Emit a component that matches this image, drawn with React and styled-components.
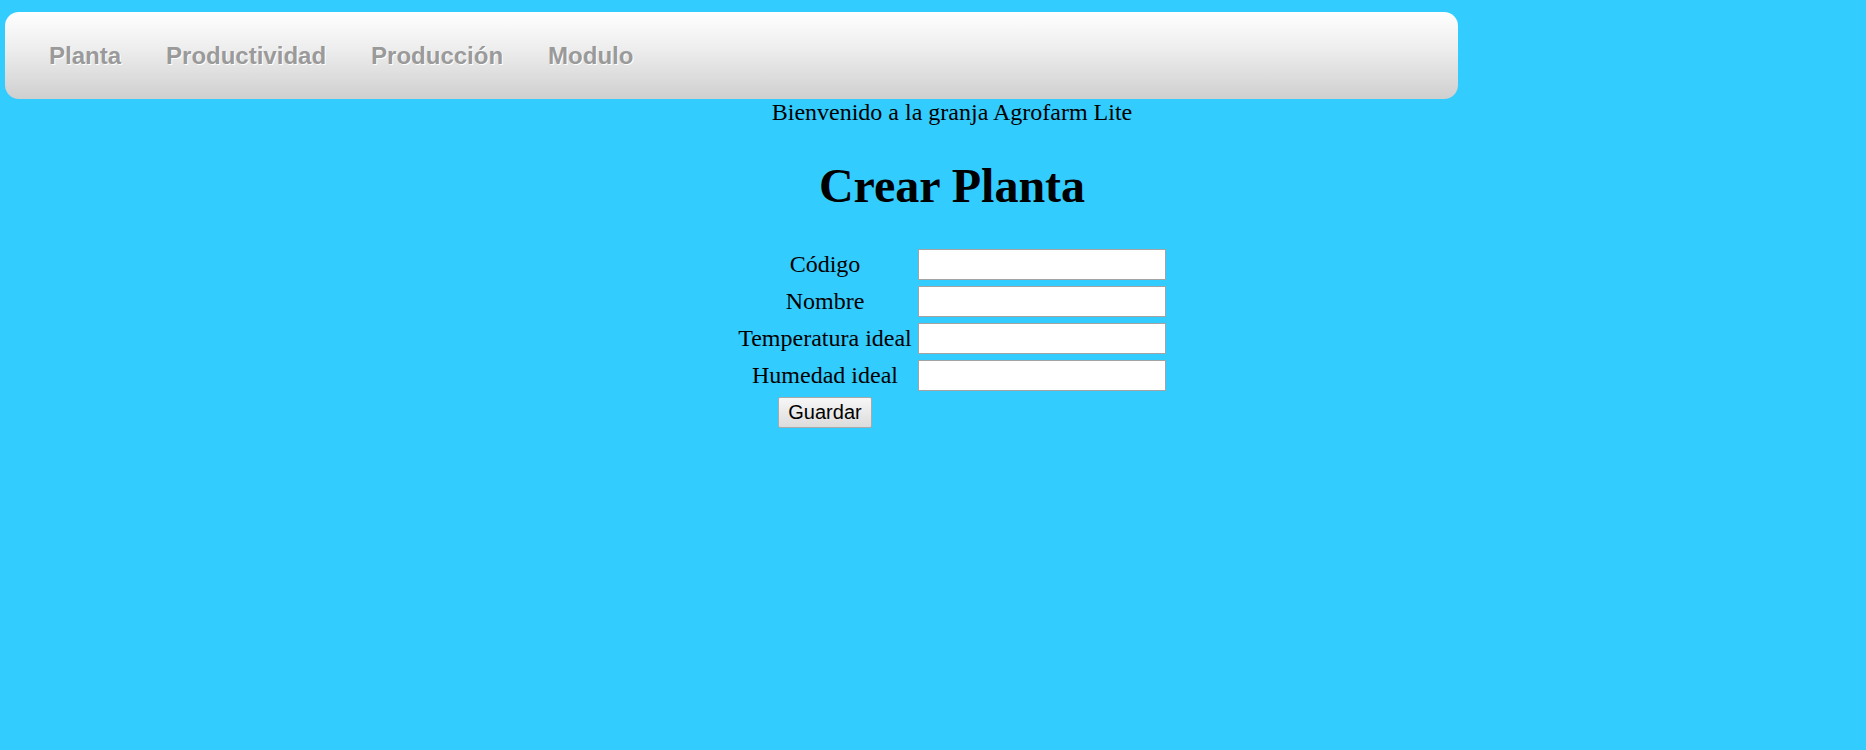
import { createGlobalStyle, styled } from "styled-components";

const GlobalStyle = createGlobalStyle`
    html, body {
        margin: 0;
        padding: 0;
        background: #33ccff;
    }
    body {
        font-family: "Liberation Serif", "Times New Roman", serif;
        color: #000;
    }
`;

const Page = styled.div`
    min-height: 750px;
    padding: 12px 0 0 5px;
    box-sizing: border-box;
`;

const NavBar = styled.nav`
    width: 1453px;
    height: 87px;
    box-sizing: border-box;
    display: flex;
    align-items: center;
    gap: 45px;
    padding-left: 44px;
    border-radius: 14px;
    background: linear-gradient(to bottom, #ffffff 0%, #ececec 45%, #cfcfcf 100%);
`;

const NavLink = styled.a`
    font-family: "Liberation Sans", Arial, sans-serif;
    font-weight: bold;
    font-size: 24px;
    color: #9a9a9a;
    text-decoration: none;
    text-shadow: 1px 1px 0 #ffffff;
    cursor: pointer;
`;

const Content = styled.main`
    padding-left: 33px;
    text-align: center;
`;

const Welcome = styled.div`
    font-size: 24px;
    line-height: 27px;
`;

const Title = styled.h1`
    font-size: 48px;
    font-weight: bold;
    margin: 32px 0 31px;
    line-height: 55px;
`;

const FormTable = styled.table`
    margin: 0 auto;
    border-spacing: 3px;
    border-collapse: separate;
    font-size: 24px;

    & td {
        padding: 1.5px;
        vertical-align: middle;
    }
`;

const LabelCell = styled.td`
    text-align: center;
    white-space: nowrap;
`;

const Field = styled.input`
    display: block;
    width: 248px;
    height: 31px;
    box-sizing: border-box;
    border: 1px solid #a3a3a3;
    background: #fff;
    padding: 2px 4px;
    font-family: "Liberation Sans", Arial, sans-serif;
    font-size: 20px;
    margin: 0;
`;

const SaveButton = styled.button`
    height: 31px;
    padding: 0 9px;
    font-family: "Liberation Sans", Arial, sans-serif;
    font-size: 20px;
    color: #000;
    border: 1px solid #a9a9a9;
    border-radius: 2px;
    background: linear-gradient(to bottom, #f7f7f7, #dcdcdc);
    cursor: pointer;
`;

const fields = [
    { name: "codigo", label: "Código" },
    { name: "nombre", label: "Nombre" },
    { name: "temperatura", label: "Temperatura ideal" },
    { name: "humedad", label: "Humedad ideal" },
];

export default function App() {
    return (
        <Page>
            <GlobalStyle />
            <NavBar>
                <NavLink>Planta</NavLink>
                <NavLink>Productividad</NavLink>
                <NavLink>Producción</NavLink>
                <NavLink>Modulo</NavLink>
            </NavBar>

            <Content>
                <Welcome>Bienvenido a la granja Agrofarm Lite</Welcome>
                <Title>Crear Planta</Title>

                <form onSubmit={(e) => e.preventDefault()}>
                    <FormTable>
                        <tbody>
                            {fields.map((f) => (
                                <tr key={f.name}>
                                    <LabelCell>{f.label}</LabelCell>
                                    <td>
                                        <Field type="text" name={f.name} />
                                    </td>
                                </tr>
                            ))}
                            <tr>
                                <LabelCell>
                                    <SaveButton type="submit">Guardar</SaveButton>
                                </LabelCell>
                                <td></td>
                            </tr>
                        </tbody>
                    </FormTable>
                </form>
            </Content>
        </Page>
    );
}
